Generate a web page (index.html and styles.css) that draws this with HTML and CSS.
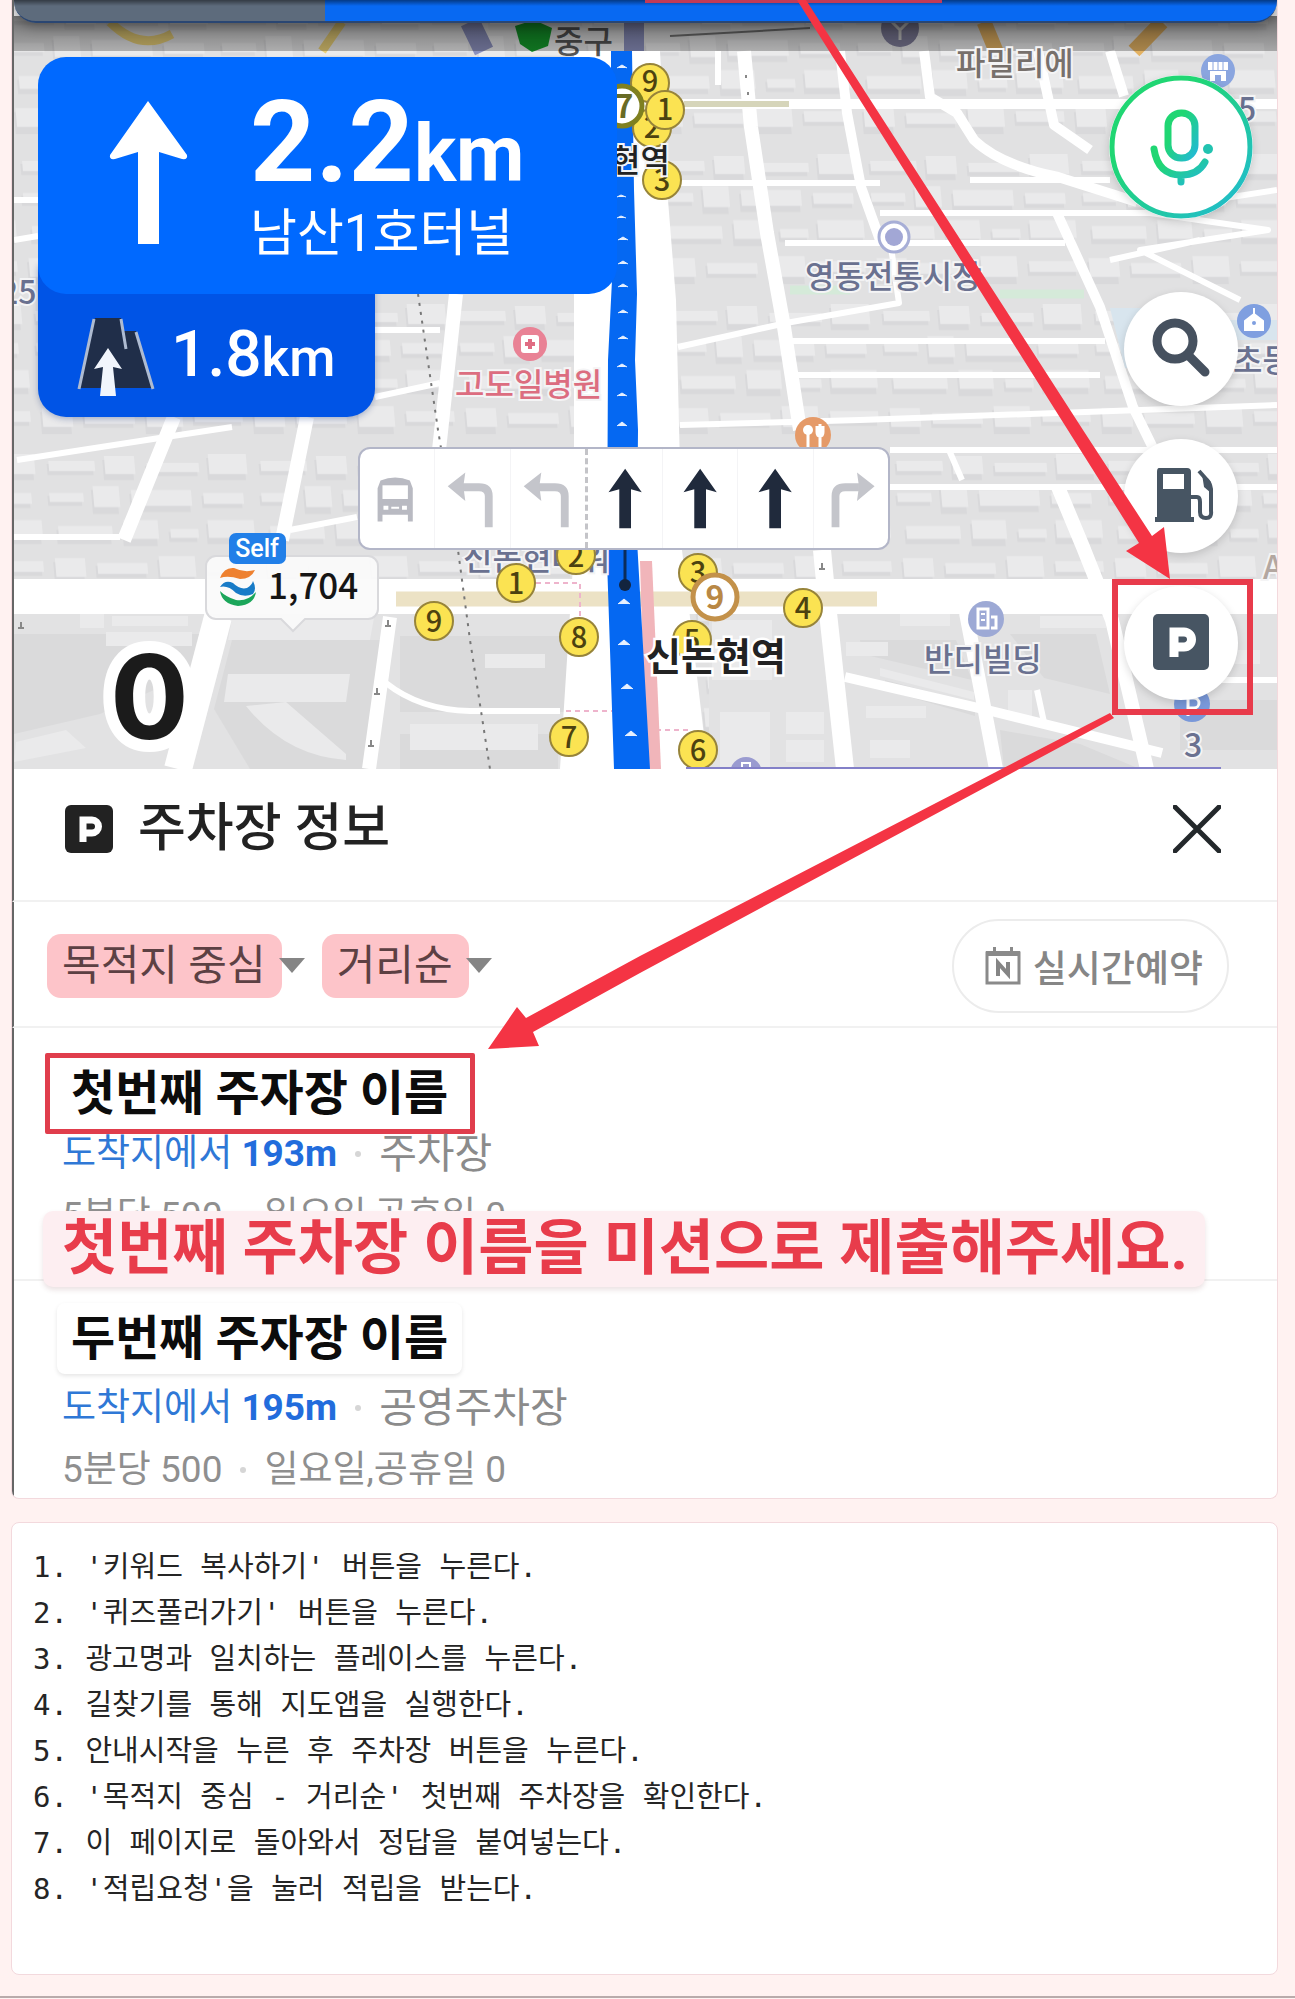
FILE: index.html
```html
<!DOCTYPE html>
<html lang="ko">
<head>
<meta charset="utf-8">
<meta name="viewport" content="width=device-width, initial-scale=1">
<title>주차장 정보</title>
<link rel="stylesheet" href="styles.css">
</head>
<body>
<main class="page">
  <section class="card guide">
    <div class="map">
      <svg class="map-art" viewBox="14 0 1263 769" preserveAspectRatio="xMinYMin slice" role="img" aria-label="지도">
        <defs>
          <pattern id="blocks" width="212" height="150" patternUnits="userSpaceOnUse" patternTransform="skewX(5)">
            <rect width="212" height="150" fill="#e1e1e2"/>
            <g fill="#d9d9db">
              <path d="M6 14h46v11H6zM62 10h30v20H62zM104 16h52v10h-52zM166 8h38v22h-38zM4 46h34v10H4zM48 40h26v24H48zM86 44h60v18H86zM158 46h40v12h-40zM10 80h54v14H10zM76 74h34v22H76zM122 82h28v10h-28zM160 74h46v20h-46zM4 112h30v22H4zM46 116h50v12H46zM108 110h36v24h-36zM156 114h48v12h-48z"/>
            </g>
            <g fill="#eaeaeb">
              <path d="M8 11h46v10H8zM64 6h30v18H64zM106 13h52v9h-52zM168 4h38v20h-38zM6 43h34v9H6zM50 36h26v21H50zM88 40h60v16H88zM160 43h40v11h-40zM12 76h54v13H12zM78 70h34v19H78zM124 79h28v9h-28zM162 70h46v18h-46zM6 108h30v19H6zM48 113h50v11H48zM110 106h36v21h-36zM158 111h48v11h-48z"/>
            </g>
          </pattern>
          <linearGradient id="shade" x1="0" y1="0" x2="0" y2="1">
            <stop offset="0" stop-color="#000" stop-opacity=".5"/>
            <stop offset="1" stop-color="#000" stop-opacity=".26"/>
          </linearGradient>
        </defs>
        <rect x="14" y="0" width="1263" height="769" fill="url(#blocks)"/>
        <!-- large building blocks near the viewer -->
        <path d="M14 614H570V769H14zM709 614H1277V769H709z" fill="#e2e2e3"/>
        <g fill="#dadadb">
          <path d="M14 634h186l-10 40-90 40-86 20zM232 640h150l-14 129H250l-36-60zM400 636h170v76H400zM400 734h158v35H400zM860 640h96l16 40-110-26zM1010 634h86l14 60-66-16zM885 680l90 24v12l-90-26zM1180 700h97v50h-97zM1000 730l80 14 60 25h-136z"/>
        </g>
        <g fill="#eaeaeb">
          <path d="M80 612h24v16H80zM112 616h76v10h-76zM106 632h86v14h-86zM232 618h142l-4 22H228zM228 674h122l-4 28H224zM246 706l40-4 60 52v6q-60-4-100-54zM485 654h60v14h-60zM410 724h128v26H410zM712 620h60v60h-60zM720 712h50v57h-50zM786 712h38v22h-38zM786 740h38v22h-38zM846 642h42v14h-42zM900 614h50v12h-50zM880 668l94 24v8l-94-24zM1040 616h66v12h-66zM1180 650h80v14h-80zM1008 690h24v28h-24zM866 706h60v12h-60zM870 740h40v18h-40zM16 742l50-12 20 18-72 14z"/>
        </g>
        <path d="M574 51H660L668 200 676 300 682 550 708 769H560L574 550z" fill="#fff"/>
        <path d="M14 579H1277V614H14z" fill="#fff"/>
        <g fill="none" stroke="#fff" stroke-linejoin="round">
          <path stroke-width="14" d="M744 51 751 127 767 233 784 327 800 430M1058 487 1083 547 1112 620 1147 769M966 613 996 769M456 294 439 450M390 617 369 769M307 417 282 540M174 417 124 540"/>
          <path stroke-width="18" d="M822 550 828 613 845 769"/>
          <path stroke-width="28" d="M218 617 178 769"/>
          <path stroke-width="10" d="M840 51 847 113 861 187 880 240M680 104H1277M924 51 930 97 957 113 974 140Q1000 165 1058 177L1137 202M1057 213 1100 307 1133 407 1154 450M1038 51 1054 125 1090 150M845 677 987 710 1162 753M1110 51 1124 96"/>
          <path stroke-width="6" d="M680 183H880M880 213H1150L1268 230 1140 250 1240 300M785 243H1065M678 347 786 323 899 303 890 240M786 341H1105M785 375H1100M680 425 860 420 1277 405M890 450H1277M890 487H1277M949 450 962 480M1037 690 1045 727M17 460 166 437 232 427M14 537H120M290 530 357 517M386 683Q420 710 470 711H560M375 397 440 383M14 200H38M14 240 38 236M375 330H440M970 180H1110M1277 190 1180 205M718 51V85M1110 260 1200 240M1150 680H1277"/>
        </g>
        <path d="M790 290H850M1000 294H1084" fill="none" stroke="#d5ead9" stroke-width="9"/>
        <path d="M1110 308h60v60h-45zM1228 320h49v20h-49z" fill="#d8e5ee"/>
        <path d="M684 104H789" stroke="#d6d5ba" stroke-width="6"/>
        <path d="M396 599H877" stroke="#e5d8b2" stroke-opacity=".75" stroke-width="15"/>
        <path d="M418 294 438 430 458 550 470 640 490 769" fill="none" stroke="#777" stroke-width="2" stroke-dasharray="3 6"/>
        <path d="M566 711H612M656 730H690M500 583H580V620" fill="none" stroke="#eeb4cc" stroke-width="2" stroke-dasharray="5 4"/>
        <path d="M388 620v6M385 626h6M377 688v6M374 694h6M371 740v6M368 746h6M21 622v6M18 628h6M822 563v6M819 569h6M746 75v3M748 92v3" fill="none" stroke="#888" stroke-width="2"/>
        <path d="M640 561H652L661 769H646z" fill="#f1b5ba"/>

        <!-- strip darkened by the card above -->
        <g fill="none" stroke-width="9">
          <path d="M110 22Q140 52 172 34M342 22 322 51" stroke="#e8cf78"/>
          <path d="M984 22 996 51M1162 22 1134 51" stroke="#e3b263" stroke-width="15"/>
          <path d="M470 22 484 51M634 22V51" stroke="#8b90bd" stroke-width="20"/>
          <path d="M670 36 810 28" stroke="#777" stroke-width="2"/>
        </g>
        <circle cx="900" cy="28" r="19" fill="#7f7d9a"/><path d="m892 22 8 8 8-8M900 30v10" stroke="#ccc" stroke-width="3" fill="none"/>
        <path d="M515 26 534 20 552 28 548 46 532 52 520 44z" fill="#159a2b"/>
        <text class="place place-grey" x="554" y="53">중구</text>
        <rect x="14" y="16" width="1263" height="35" fill="url(#shade)"/>

        <path d="M611 51H632L634 190 637 294 635 360 638 430 637 540 650 769H614L607 560 608 360 613 260 611 140z" fill="#0568f2"/>
        <path d="m617 68 5-3 5 3M617 197l4-2 5 2M617 218l4-2 5 2M618 240l5-3 5 3M618 264l5-3 5 3M618 287l5-3 5 3M618 313l5-3 5 3M618 339l5-3 5 3M617 367l5-3 5 3M617 396l5-3 5 3M617 426l5-4 5 4M618 604l6-5 6 5M618 645l6-5 6 5M621 689l6-5 6 5M625 736l6-5 6 5" fill="#e6f0ff" stroke="#e6f0ff" stroke-width="1"/>
        <path d="M625 540V585" stroke="#0b2c5b" stroke-width="3"/><circle cx="625" cy="585" r="6" fill="#13243e"/>

        <text class="place place-slate" x="463" y="570">신논현타워</text>

        <!-- station exits -->
        <g class="exit">
          <circle cx="650" cy="83" r="19"/><text x="650" y="92">9</text>
          <circle cx="652" cy="128" r="19"/><text x="652" y="138">2</text>
          <circle cx="665" cy="110" r="19"/><text x="665" y="120">1</text>
          <circle cx="662" cy="180" r="19"/><text x="662" y="191">3</text>
          <circle cx="516" cy="583" r="19"/><text x="516" y="594">1</text>
          <circle cx="576" cy="555" r="19"/><text x="576" y="567">2</text>
          <circle cx="434" cy="621" r="19"/><text x="434" y="632">9</text>
          <circle cx="579" cy="637" r="19"/><text x="579" y="648">8</text>
          <circle cx="569" cy="737" r="19"/><text x="569" y="748">7</text>
          <circle cx="698" cy="573" r="19"/><text x="698" y="583">3</text>
          <circle cx="803" cy="608" r="19"/><text x="803" y="619">4</text>
          <circle cx="692" cy="640" r="19"/><text x="692" y="651">5</text>
          <circle cx="698" cy="750" r="19"/><text x="698" y="761">6</text>
        </g>
        <circle cx="622" cy="106" r="20" fill="#fff" stroke="#7f8020" stroke-width="5"/><text class="line-no line-olive" x="624" y="118">7</text>
        <circle cx="715" cy="597" r="22" fill="#fff" stroke="#c3914a" stroke-width="5"/><text class="line-no line-brown" x="715" y="609">9</text>

        <!-- place names -->
        <text class="place place-black" x="611" y="172">현역</text>
        <text class="station" x="646" y="670">신논현역</text>
        <text class="place place-brown" x="956" y="75">파밀리에</text>
        <text class="place place-slate" x="805" y="288">영동전통시장</text>
        <text class="place place-red" x="455" y="396">고도일병원</text>
        <text class="place place-slate" x="924" y="671">반디빌딩</text>
        <text class="place place-slate" x="1233" y="372">초등</text>
        <text class="place place-slate" x="1238" y="121">5</text>
        <text class="place place-slate" x="0" y="304">25</text>
        <text class="place place-slate" x="1184" y="757">3</text>
        <text class="place place-faint" x="1263" y="579">A</text>

        <!-- place markers -->
        <circle cx="894" cy="237" r="15" fill="#fff" stroke="#a7aed6" stroke-width="3"/><circle cx="894" cy="237" r="9" fill="#a2a7d5"/>
        <circle cx="530" cy="344" r="17" fill="#e98295"/><rect x="521" y="335" width="18" height="18" rx="3" fill="#fff"/><path d="M530 339v10M525 344h10" stroke="#e06c83" stroke-width="4"/>
        <circle cx="813" cy="435" r="18" fill="#e59a68"/><circle cx="808" cy="430" r="5" fill="#fff"/><path d="M808 432v16M817 426v6q0 4 3 4t3-4v-6M820 424v24" fill="none" stroke="#fff" stroke-width="3"/>
        <circle cx="986" cy="619" r="18" fill="#9da9d5"/><path d="M978 628V609h10v19zM991 617h5v11h-5" fill="none" stroke="#fff" stroke-width="3"/><path d="M981 614h4M981 620h4" stroke="#fff" stroke-width="2"/>
        <circle cx="1218" cy="71" r="17" fill="#8aa5df"/><path d="M1208 62h20v8h-20zM1210 71h16v10h-5v-6h-6v6h-5z" fill="#fff"/><path d="M1213 61v9M1218 61v9M1223 61v9" stroke="#8aa5df" stroke-width="1"/>
        <circle cx="1254" cy="321" r="17" fill="#7f9fe0"/><path d="M1245 330v-9l9-7 9 7v9zM1254 314v-6" fill="#fff" stroke="#fff" stroke-width="2"/><circle cx="1254" cy="323" r="2" fill="#7f9fe0"/>
        <circle cx="1192" cy="704" r="18" fill="#7998d9"/><path d="M1188 716v-18h6a5 5 0 0 1 0 10h-6" fill="none" stroke="#fff" stroke-width="3"/>
        <circle cx="746" cy="773" r="16" fill="#9a9bd0"/><path d="M742 769v-6h8v6" fill="none" stroke="#fff" stroke-width="2"/>
        <path d="M686 768H1221" stroke="#8380c8" stroke-width="2"/>

        <!-- fuel price bubble -->
        <path d="M216 556H368a10 10 0 0 1 10 10V609a10 10 0 0 1-10 10H305L293 631 281 619H216a10 10 0 0 1-10-10V566a10 10 0 0 1 10-10z" fill="#fafafa" fill-opacity=".95" stroke="#d9d9dc" stroke-width="2"/>
        <path d="M220 578q4-11 14-10 10 5 21 2-4 9-15 9-12-4-20-1z" fill="#ee8130"/>
        <path d="M220 587q5-8 13-4 7 7 14 5 5-3 6-7 4 8 0 13-9 4-17-1-8-8-16-6z" fill="#187bc7"/>
        <path d="M220 591q6 6 16 9 11 2 20-8-2 13-18 14-16-2-18-15z" fill="#1ba65a"/>
        <text class="price" x="268" y="599">1,704</text>
        <rect x="229" y="533" width="57" height="31" rx="7" fill="#217fe8"/>
        <text class="self" x="257" y="557">Self</text>
      </svg>

      <div class="top-bar"></div>

      <div class="next-turn">
        <svg class="tunnel" viewBox="0 0 78 80" aria-hidden="true"><path d="M18 1H44L47 14H59L76 71H2z" fill="#202e49"/><path d="M17 2 2 72M44 2 49 32M59 15 76 72" stroke="#aebbd1" stroke-width="3" fill="none"/><path d="M31 31 45 52 36 50 39 79H23L26 50 17 52z" fill="#f1f5fc"/></svg>
        <span class="next-dist">1.8<small>km</small></span>
      </div>
      <div class="turn">
        <svg class="turn-arrow" viewBox="0 0 79 145" aria-hidden="true"><path d="M39 1 78 55Q79 60 73 59L50 52V144H29V52L6 59Q0 60 1 55z" fill="#fff"/></svg>
        <div class="turn-text">
          <strong class="turn-dist">2.2<small>km</small></strong>
          <span class="turn-name">남산1호터널</span>
        </div>
      </div>

      <div class="lanes">
        <svg viewBox="0 0 76 99"><path d="M21 31q15-6 30 0l3 8v34h-5v-7H23v7h-5V39z" fill="#b9bac2"/><path d="M23 36h26v14H23z" fill="#fff"/><path d="M24 57h5v4h-5zM43 57h5v4h-5zM32 58h8v2h-8z" fill="#fff"/></svg>
        <svg viewBox="0 0 76 99"><path d="M55 79V47q0-9-10-9H28" fill="none" stroke="#c4c5cb" stroke-width="8"/><path d="M13 37 31 23 29 37 31 52z" fill="#c4c5cb"/></svg>
        <svg viewBox="0 0 76 99"><path d="M55 79V47q0-9-10-9H28" fill="none" stroke="#c4c5cb" stroke-width="8"/><path d="M13 37 31 23 29 37 31 52z" fill="#c4c5cb"/></svg>
        <svg class="lane-split" viewBox="0 0 76 99"><path d="M38 19 55 43 44 40V80H32V40L21 43z" fill="#202a3c"/></svg>
        <svg viewBox="0 0 76 99"><path d="M38 19 55 43 44 40V80H32V40L21 43z" fill="#202a3c"/></svg>
        <svg viewBox="0 0 76 99"><path d="M38 19 55 43 44 40V80H32V40L21 43z" fill="#202a3c"/></svg>
        <svg viewBox="0 0 76 99"><path d="M22 79V47q0-9 10-9H46" fill="none" stroke="#c4c5cb" stroke-width="8"/><path d="M62 37 44 23 46 37 44 52z" fill="#c4c5cb"/></svg>
      </div>

      <output class="speed">0</output>

      <div class="tools">
        <button class="tool voice" type="button" aria-label="음성 검색">
          <svg viewBox="0 0 144 144"><defs><linearGradient id="mic" x1="0" y1="0" x2="1" y2="1"><stop offset=".3" stop-color="#20d673"/><stop offset="1" stop-color="#22b9d6"/></linearGradient></defs><circle cx="72" cy="72" r="69" fill="#fff" stroke="url(#mic)" stroke-width="5"/><g fill="none" stroke="url(#mic)" stroke-width="7" stroke-linecap="round"><rect x="59" y="38" width="27" height="45" rx="13"/><path d="M45 74q4 26 27 26 17 0 24-13M72 101v6"/></g><circle cx="99" cy="74" r="5" fill="#22c3b0"/></svg>
        </button>
        <button class="tool" type="button" aria-label="검색">
          <svg viewBox="0 0 114 114"><circle cx="51" cy="49" r="18" fill="none" stroke="#46515f" stroke-width="9"/><path d="m65 64 16 16" stroke="#46515f" stroke-width="9" stroke-linecap="round"/></svg>
        </button>
        <button class="tool" type="button" aria-label="주유소">
          <svg viewBox="0 0 114 114"><path d="M35 29h28q4 0 4 4v45h3v5H31v-5h2V33q0-4 2-4z" fill="#475563"/><path d="M39 35h21v15H39z" fill="#fff"/><path d="M67 58h6q3 0 3 5v10q0 6 6 6t5-7V50q-1-6-4-9l-8-9" fill="none" stroke="#475563" stroke-width="4"/><path d="M78 35l9 8v11l-7-6z" fill="#475563"/></svg>
        </button>
        <button class="tool" type="button" aria-label="주차장">
          <svg viewBox="0 0 114 114"><rect x="29" y="28" width="56" height="56" rx="5" fill="#475563"/><path d="M50 71V46h10a7 7 0 0 1 0 15H50" fill="none" stroke="#fff" stroke-width="9"/></svg>
        </button>
      </div>
    </div>

    <header class="sheet-head">
      <svg class="p-badge" viewBox="0 0 48 48" aria-hidden="true"><rect width="48" height="48" rx="6" fill="#222"/><path d="M18 37V15h9a6 6 0 0 1 0 13H18" fill="none" stroke="#fff" stroke-width="7"/></svg>
      <h1 class="sheet-title">주차장 정보</h1>
      <button class="close" type="button" aria-label="닫기"><svg viewBox="0 0 48 48"><path d="M2 2 46 46M46 2 2 46" stroke="#23282b" stroke-width="5" stroke-linecap="round"/></svg></button>
    </header>

    <div class="filters">
      <button class="filter" type="button"><span class="pill">목적지 중심</span><i class="caret"></i></button>
      <button class="filter" type="button"><span class="pill">거리순</span><i class="caret"></i></button>
      <button class="reserve" type="button">
        <svg viewBox="0 0 36 38" aria-hidden="true"><path d="M2 6H34V36H2z" fill="none" stroke="#8a8a8a" stroke-width="3"/><path d="M1 4h34v5H1zM8 0h3v5H8zM25 0h3v5h-3z" fill="#8a8a8a"/><path d="M13 29V16l10 11V15" fill="none" stroke="#858585" stroke-width="4"/></svg>
        실시간예약
      </button>
    </div>

    <ul class="lots">
      <li class="lot">
        <h2 class="lot-name marked">첫번째 주자장 이름</h2>
        <p class="meta"><span class="from">도착지에서 <b>193m</b></span><i class="dot"></i><span class="kind">주차장</span></p>
        <p class="rate"><span>5분당 500</span><i class="dot"></i><span>일요일,공휴일 0</span></p>
        <p class="notice">첫번째 주차장 이름을 미션으로 제출해주세요.</p>
      </li>
      <li class="lot">
        <h2 class="lot-name raised">두번째 주자장 이름</h2>
        <p class="meta"><span class="from">도착지에서 <b>195m</b></span><i class="dot"></i><span class="kind">공영주차장</span></p>
        <p class="rate"><span>5분당 500</span><i class="dot"></i><span>일요일,공휴일 0</span></p>
      </li>
    </ul>

    <svg class="pointers" viewBox="14 0 1263 1100" preserveAspectRatio="xMaxYMin meet" aria-hidden="true">
      <path d="M645 0H942V3H645z" fill="#c13a58"/>
      <g fill="#f43444"><path d="M797 0H806L1083 430 1152 536 1164 527 1170 579 1126 551 1139 543z"/><path d="M1110 713 1114 718 640 973 533 1032 539 1046 488 1049 517 1007 526 1018 640 956z"/></g>
      <rect x="1115" y="582" width="135" height="130" fill="none" stroke="#e83b4b" stroke-width="6"/>
    </svg>
  </section>

  <section class="card steps">
    <ol>
      <li>1. '키워드 복사하기' 버튼을 누른다.</li>
      <li>2. '퀴즈풀러가기' 버튼을 누른다.</li>
      <li>3. 광고명과 일치하는 플레이스를 누른다.</li>
      <li>4. 길찾기를 통해 지도앱을 실행한다.</li>
      <li>5. 안내시작을 누른 후 주차장 버튼을 누른다.</li>
      <li>6. '목적지 중심 - 거리순' 첫번째 주차장을 확인한다.</li>
      <li>7. 이 페이지로 돌아와서 정답을 붙여넣는다.</li>
      <li>8. '적립요청'을 눌러 적립을 받는다.</li>
    </ol>
  </section>
</main>
</body>
</html>
```
FILE: styles.css
```css
* { box-sizing: border-box; }

body {
  margin: 0;
  background: #fff2f1;
  color: #222;
  font-family: Roboto, "Noto Sans CJK KR", sans-serif;
}

h1, h2, p, ul, ol { margin: 0; padding: 0; }
ul, ol { list-style: none; }
button { margin: 0; padding: 0; border: 0; background: none; color: inherit; font: inherit; }
svg { display: block; }

.page {
  display: flex;
  flex-direction: column;
  gap: 23px;
  padding: 0 17px 21px 11px;
  border-bottom: 2px solid #b9abab;
}

.card {
  border: 1px solid #f3d9dd;
  border-radius: 8px;
  background: #fff;
}

.guide {
  position: relative;
  border-top: 0;
  border-radius: 0 0 8px 8px;
  overflow: hidden;
}

/* Map */
.map {
  position: relative;
  height: 769px;
  overflow: hidden;
  border-left: 2px solid #666;
}
.map-art { width: 100%; height: 100%; }

.place {
  font: 500 32px "Noto Sans CJK KR", sans-serif;
  stroke: #f4f4f5;
  stroke-width: 4px;
  paint-order: stroke;
}
.place-slate { fill: #6a7190; }
.place-brown { fill: #77706c; }
.place-red { fill: #dc6d80; }
.place-grey { fill: #555; stroke: none; }
.place-black { fill: #222; }
.place-faint { fill: #b3a7a0; }
.station {
  font: 700 38px "Noto Sans CJK KR", sans-serif;
  fill: #222;
  stroke: #fff;
  stroke-width: 5px;
  paint-order: stroke;
}
.exit circle { fill: #fbe352; stroke: #97843a; stroke-width: 2px; }
.exit text { font: 500 29px "Noto Sans CJK KR", sans-serif; text-anchor: middle; fill: #4c4210; }
.line-no { font: 700 32px "Noto Sans CJK KR", sans-serif; text-anchor: middle; }
.line-olive { fill: #686b25; }
.line-brown { fill: #b98845; }
.price { font: 500 35px "Noto Sans CJK KR", sans-serif; fill: #151515; }
.self { font: 500 25px Roboto, sans-serif; text-anchor: middle; fill: #fff; }

.top-bar {
  position: absolute;
  top: 0;
  left: 0;
  right: 0;
  height: 23px;
  border-bottom: 2px solid #2a4672;
  border-radius: 0 0 22px 22px;
  background: linear-gradient(rgba(0, 0, 0, .45), rgba(0, 0, 0, 0) 6px), linear-gradient(90deg, #5d6b7c 311px, #0869f2 311px);
  box-shadow: 0 4px 12px rgba(0, 0, 0, .3);
}

.turn, .next-turn { position: absolute; left: 24px; display: flex; color: #fff; }
.turn {
  top: 57px;
  width: 579px;
  height: 237px;
  padding: 37px 0 0 71px;
  gap: 62px;
  border-radius: 28px;
  background: #0069ff;
}
.turn-arrow { width: 79px; height: 145px; margin-top: 6px; }
.turn-text { display: flex; flex-direction: column; gap: 10px; }
.turn-dist { font-size: 114px; line-height: 96px; font-weight: 700; }
.turn-dist small { font-size: 79px; line-height: 79px; }
.turn-name { font-size: 51px; line-height: 60px; }
.next-turn {
  top: 264px;
  width: 337px;
  height: 153px;
  padding: 53px 0 0 39px;
  gap: 16px;
  border-radius: 0 0 28px 28px;
  background: #0054e6;
  box-shadow: 0 2px 6px rgba(0, 40, 120, .3);
}
.tunnel { width: 78px; height: 80px; }
.next-dist { font-size: 64px; line-height: 76px; font-weight: 500; }
.next-dist small { font-size: 53px; line-height: 53px; }

.lanes {
  position: absolute;
  top: 447px;
  left: 344px;
  display: flex;
  width: 532px;
  height: 103px;
  border: 2px solid #b3b6c8;
  border-radius: 12px;
  background: #fff;
}
.lanes svg { flex: 1; min-width: 0; border-left: 1px solid #f4f4f6; }
.lanes svg:first-child { border-left: 0; }
.lanes .lane-split { border-left: 3px dashed #c4c4c8; }

.speed {
  position: absolute;
  top: 627px;
  left: 96px;
  font: 700 117px/140px Inter, sans-serif;
  color: #1b1b1b;
  -webkit-text-stroke: 24px #fff;
  paint-order: stroke;
}

.tools {
  position: absolute;
  top: 75px;
  right: 24px;
  display: flex;
  flex-direction: column;
  align-items: center;
  gap: 33px;
}
.tool {
  width: 114px;
  height: 114px;
  border-radius: 50%;
  background: #fff;
  box-shadow: 0 3px 8px rgba(0, 0, 0, .15);
}
.voice { width: 144px; height: 144px; margin-bottom: 40px; }

/* Parking sheet */
.sheet-head {
  display: flex;
  align-items: center;
  height: 133px;
  padding: 0 56px 12px 51px;
  border-left: 2px solid #666;
  border-bottom: 2px solid #f1f1f1;
}
.p-badge { width: 48px; height: 48px; }
.sheet-title { margin-left: 25px; font-size: 52px; line-height: 60px; font-weight: 500; }
.close { width: 48px; height: 48px; margin-left: auto; }

.filters {
  display: flex;
  align-items: center;
  gap: 17px;
  height: 126px;
  padding: 3px 48px 0 33px;
  border-left: 2px solid #666;
  border-bottom: 2px solid #f1f1f1;
}
.filter { display: flex; align-items: center; font-size: 42px; line-height: 64px; color: #5c4043; }
.pill { padding: 0 16px 0 15px; border-radius: 14px; background: #fdc4c9; }
.caret {
  border: 13px solid transparent;
  border-top: 15px solid #858585;
  border-bottom: 0;
  margin-left: -3px;
}
.reserve {
  display: flex;
  align-items: center;
  gap: 12px;
  height: 94px;
  margin-left: auto;
  padding: 0 24px 0 31px;
  border: 2px solid #ececec;
  border-radius: 47px;
  font-size: 37px;
  font-weight: 500;
  color: #868686;
}
.reserve svg { width: 36px; height: 38px; }

.lots { border-left: 2px solid #666; }
.lot { position: relative; padding: 25px 48px 43px; }
.lot + .lot { padding: 22px 48px 8px; border-top: 2px solid #f1f1f1; }
.lot-name {
  width: fit-content;
  font-size: 48px;
  line-height: 71px;
  font-weight: 700;
  color: #0c0c0c;
}
.marked { margin-left: -17px; padding: 0 22px 0 21px; border: 5px solid #e03d4c; border-radius: 2px; }
.raised { margin: 0 0 14px -5px; padding: 0 14px; border-radius: 8px; box-shadow: 0 2px 4px rgba(0, 0, 0, .1); }
.meta, .rate { display: flex; align-items: center; line-height: 40px; }
.from { font-size: 37px; color: #2f78d6; }
.from b { font-weight: 700; color: #226cdc; }
.kind { font-size: 41px; color: #8b8b8b; }
.rate { margin-top: 22px; font-size: 37px; color: #8f8f8f; }
.dot { width: 6px; height: 6px; margin: 0 18px; border-radius: 50%; background: #d6d6d6; }
.notice {
  position: absolute;
  left: 29px;
  bottom: -8px;
  z-index: 1;
  padding: 0 17px 0 19px;
  border-radius: 10px;
  background: #fdeef1;
  box-shadow: 0 3px 5px rgba(120, 60, 70, .15);
  font-size: 60px;
  line-height: 76px;
  font-weight: 700;
  white-space: nowrap;
  color: #e83c4b;
}

.pointers { position: absolute; top: 0; left: 2px; width: calc(100% - 2px); pointer-events: none; }

/* Steps */
.steps { padding: 21px 21px 62px; }
.steps li {
  font: 29px/46px "DejaVu Sans Mono", "Noto Sans CJK KR", monospace;
  color: #252525;
}
```
